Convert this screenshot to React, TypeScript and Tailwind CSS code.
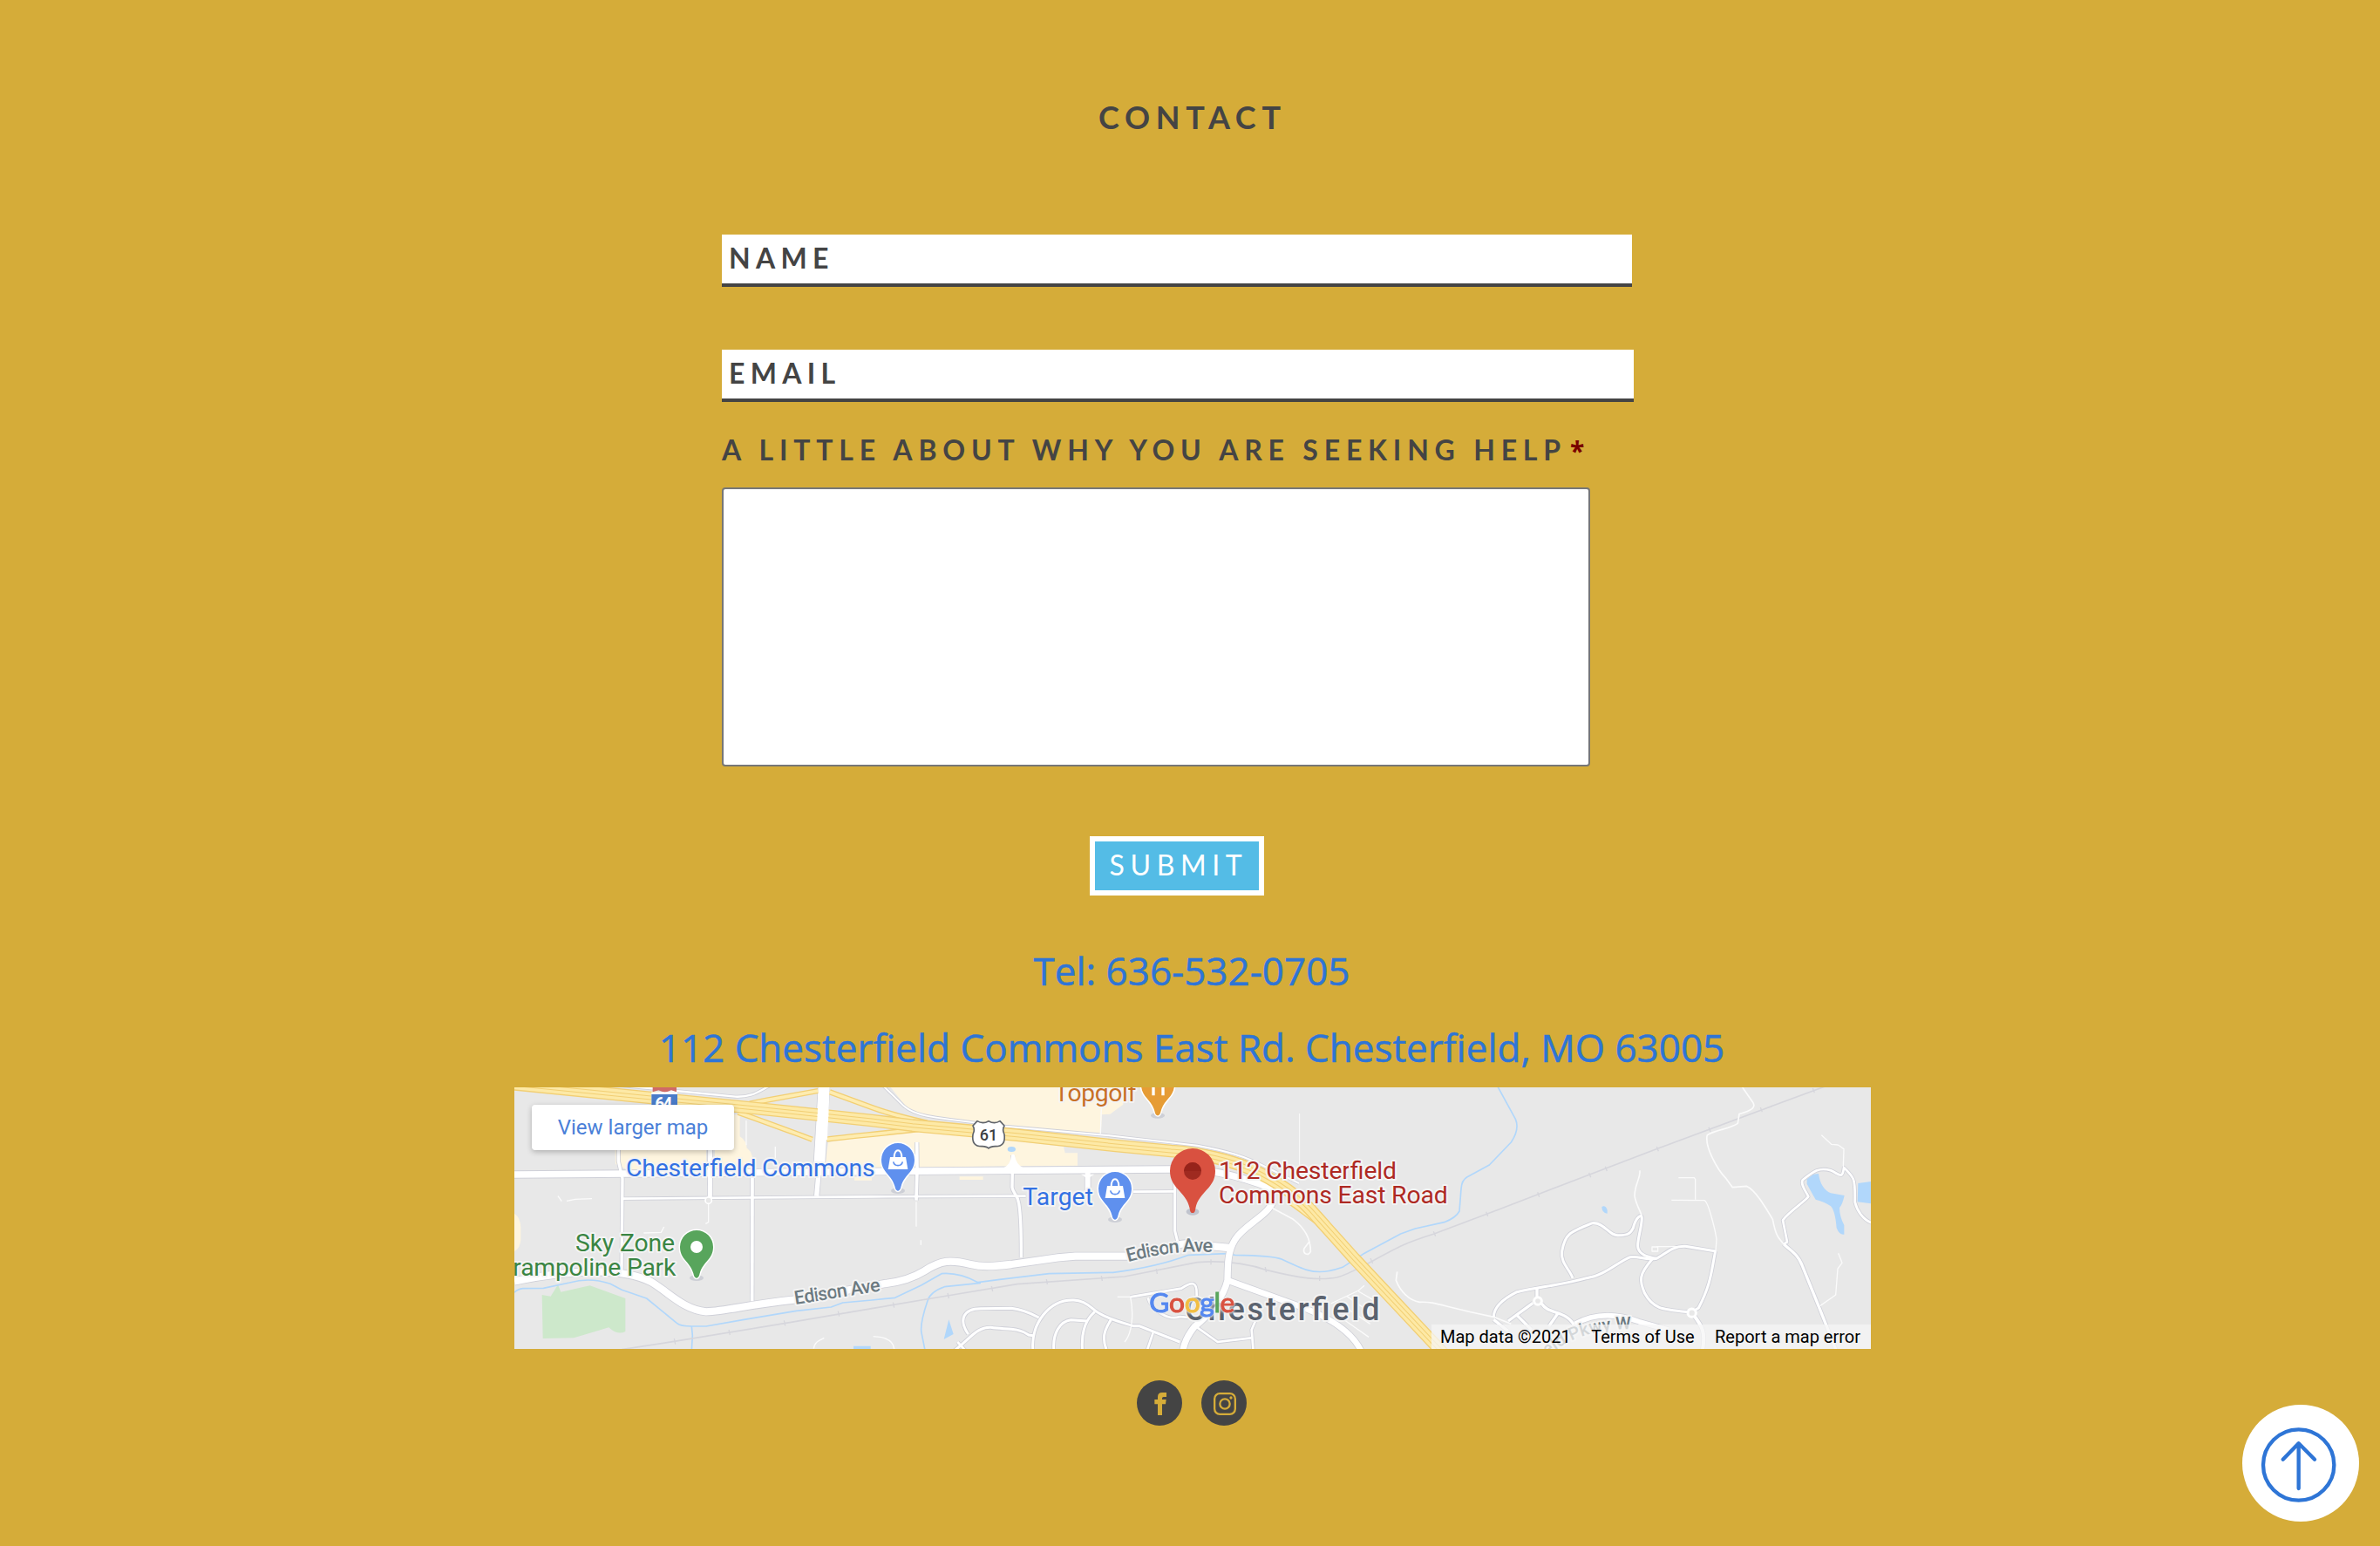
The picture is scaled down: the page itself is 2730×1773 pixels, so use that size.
import React from "react";

const CASING = "#cfd0d8";

type Road = { d: string; w: number };

const majorRoads: Road[] = [
  { d: "M30,336 L420,333 L1300,325 L2290,318 C2400,315 2500,330 2640,385", w: 23 },
  { d: "M30,703 C100,690 150,678 250,672 S440,675 500,705 C560,740 610,800 690,808 C760,806 840,782 990,767 L1300,712 C1360,705 1400,693 1440,668 C1500,630 1530,628 1600,645 C1640,655 1680,652 1740,645 L1900,622 L1960,617 L2140,617 C2240,605 2290,575 2340,574 L2490,588", w: 25 },
  { d: "M2640,430 C2620,480 2540,510 2510,560 C2485,600 2485,640 2484,700 C2470,760 2420,820 2370,860 C2350,885 2335,910 2330,945", w: 22 },
  { d: "M2490,702 L2720,785 C2820,820 2910,870 2945,945", w: 20 },
  { d: "M1096,20 L1078,330", w: 38 },
  { d: "M1078,320 L1070,410", w: 16 },
];

const minorRoads: Road[] = [
  { d: "M400,419 L1260,412 L1790,410 M2160,395 L2300,394", w: 8 },
  { d: "M388,200 L388,290 L402,350 L399,665", w: 10 },
  { d: "M704,240 L703,418", w: 15 },
  { d: "M849,335 L848,772", w: 11 },
  { d: "M1415,225 L1416,320 L1413,425", w: 11 },
  { d: "M1745,270 L1743,380 C1745,400 1762,405 1766,435 C1775,490 1774,560 1774,622", w: 10 },
  { d: "M2003,330 L2003,395", w: 18 },
  { d: "M2303,330 L2303,530 L2312,566", w: 9 },
  { d: "M1200,-60 C1290,20 1330,60 1370,100 C1410,135 1450,138 1720,170 L2060,200 L2380,236 C2480,255 2540,270 2620,312 L2730,366", w: 6 },
  { d: "M400,30 L790,68 C850,70 870,50 910,30", w: 7 },
  { d: "M1540,945 C1600,900 1620,860 1670,862 C1720,870 1760,860 1800,888 L1815,890", w: 9 },
  { d: "M1592,885 C1560,840 1570,795 1640,797 L1740,796 C1780,800 1810,815 1835,828", w: 9 },
  { d: "M1815,945 C1805,850 1870,765 1955,768 C2000,770 2020,800 2030,805 C2070,835 2140,850 2160,857 L2180,857 L2320,912", w: 9 },
  { d: "M1887,945 C1880,880 1910,840 1945,836 L2000,840", w: 9 },
  { d: "M2027,808 C1990,840 1980,890 1985,945", w: 9 },
  { d: "M2083,836 C2060,870 2050,900 2070,945", w: 9 },
  { d: "M2228,880 L2206,945", w: 8 },
  { d: "M2150,757 L2325,728 C2360,705 2380,700 2378,750 L2378,800 M2210,760 C2220,800 2280,840 2320,825 L2370,830", w: 8 },
  { d: "M2370,855 L2450,912 L2565,898 M2580,840 L2567,870 L2573,945", w: 8 },
  { d: "M1555,912 L1590,950", w: 8 },
  { d: "M3400,826 C3400,790 3440,760 3480,740 C3560,722 3640,715 3720,692 C3780,685 3830,635 3870,620 C3900,615 3920,632 3960,625 C3990,610 4015,580 4060,583 L4165,600", w: 9 },
  { d: "M3672,692 C3660,660 3630,640 3635,600 C3645,540 3660,535 3740,503 C3780,500 3800,550 3830,545 C3860,545 3870,540 3880,520 C3890,480 3910,470 3910,485 C3910,520 3890,570 3897,590 C3905,615 3935,620 3960,625", w: 9 },
  { d: "M3945,628 C3900,680 3900,700 3920,745 C3950,800 3980,800 4080,810 L4105,795 C4150,710 4150,660 4163,600", w: 9 },
  { d: "M4398,575 C4430,605 4445,610 4460,645 C4490,720 4520,790 4580,945", w: 10 },
  { d: "M4398,575 L4410,568 L4395,493 C4420,460 4470,430 4483,412 C4475,395 4455,370 4463,355 C4500,325 4520,310 4560,322 C4590,335 4600,355 4605,312 C4640,345 4645,350 4643,430 C4650,460 4670,490 4700,502", w: 8 },
  { d: "M3549,725 L3549,760 M3535,778 L3450,840 M3565,780 C3590,820 3650,800 3680,860 M3620,815 L3590,858 M3480,820 L3530,870 M3400,835 L3450,875", w: 10 },
  { d: "M3680,850 C3760,805 3840,820 3900,842 L4000,870", w: 17 },
  { d: "M4085,815 C4120,860 4130,880 4118,945", w: 12 },
];

const paths: Road[] = [
  { d: "M2640,452 L2710,490 C2750,520 2770,560 2770,600 C2765,618 2740,610 2748,590 L2766,566", w: 5 },
  { d: "M2732,126 L2732,310", w: 3 },
  { d: "M3068,670 L3064,700 C3080,740 3110,770 3145,775 C3200,772 3220,790 3400,826 L3460,850", w: 5 },
  { d: "M4256,36 L4290,85 C4310,110 4270,120 4245,128 L4240,160 C4210,180 4170,180 4135,200 C4125,240 4170,320 4200,350 L4222,380 L4270,376 C4300,390 4330,440 4360,490 C4370,540 4375,550 4398,575", w: 5 },
  { d: "M3903,322 C3905,350 3885,370 3885,410 C3890,440 3905,460 3910,480", w: 5 },
  { d: "M4036,347 L4090,347 L4094,352 L4094,422 M4012,424 L4125,425 C4140,430 4165,540 4167,560 L4164,600", w: 4 },
  { d: "M3960,584 L4060,584 M3945,585 h20 v15 h-20 z", w: 4 },
  { d: "M4528,200 L4562,232 L4585,234 L4605,248 L4603,310", w: 4 },
  { d: "M4586,607 L4599,640 L4584,660 L4577,750 L4524,787", w: 4 },
  { d: "M210,427 L240,421 L297,419 M475,537 L535,535 L545,516 M698,430 L698,500 L688,505 M928,240 L928,280 M828,150 L828,235 M180,410 L193,428 M1060,935 C1062,915 1075,908 1096,898", w: 4 },
  { d: "M1413,430 L1413,515 M1429,562 L1429,578 M2050,105 L2047,195 M2105,757 L2150,757 C2165,830 2150,890 2130,912 M1265,893 C1310,895 1335,910 1337,936", w: 4 },
  { d: "M2840,780 L2935,735 L2955,718 M2935,738 L2990,770 M2895,755 L2960,800 M2870,825 L2970,895 M2900,800 L2975,850", w: 4 },
];

const HIGHWAY =
  "M0,22 L500,72 L860,108 L1260,150 L1400,167 L1760,200 L2100,237 L2290,255 C2400,262 2500,290 2560,315 C2660,360 2740,420 2790,480 L2920,625 L3230,955";
const RAMPS =
  "M840,92 L900,80 L1075,48 M1115,52 L1260,105 C1300,120 1370,140 1450,158 M800,122 C880,150 960,180 1055,215 M1105,215 C1180,205 1300,195 1420,180 M2690,425 C2740,455 2770,490 2810,510 M3120,840 L3220,925";
const RAIL =
  "M400,938 L580,910 L960,848 L1260,797 L1520,753 L1760,713 L2130,687 L2380,638 C2480,630 2560,645 2620,665 C2740,695 2800,700 2860,690 C2900,680 2940,655 2980,635 C3080,580 3100,570 3195,540 L3420,455 L3960,248 L4540,33";

function Pin({ x, y, fill, children }: { x: number; y: number; fill: string; children?: React.ReactNode }) {
  return (
    <g transform={`translate(${x} ${y})`}>
      <ellipse cx="0" cy="107" rx="24" ry="10" fill="#9aa0b4" opacity="0.35" />
      <path
        d="M0,107 C-7,107 -9,99 -11,91 C-22,50 -57,44 -57,0 A57,57 0 1 1 57,0 C57,44 22,50 11,91 C9,99 7,107 0,107 Z"
        fill={fill}
        stroke="#fff"
        strokeWidth="9"
        paintOrder="stroke"
      />
      {children}
    </g>
  );
}

function Bag() {
  return (
    <g>
      <path d="M-27,-9 H27 L34,33 H-34 Z" fill="#fff" />
      <path d="M-13,-8 C-13,-40 13,-40 13,-8" fill="none" stroke="#fff" strokeWidth="6" />
      <path d="M-16,7 C-12,24 12,24 16,7" fill="none" stroke="#5f90ee" strokeWidth="5" />
    </g>
  );
}

function MapDrawing() {
  const halo = { paintOrder: "stroke", strokeLinejoin: "round" } as const;
  return (
    <svg viewBox="30 36 4668 900" className="block h-[300px] w-[1556px]" fontFamily="Roboto, sans-serif">
      <rect x="30" y="36" width="4668" height="900" fill="#e8e8e8" />
      <g fill="#fef5df">
        <path d="M1325,36 H2130 L2125,95 L2080,128 L2052,130 L2048,198 L1720,170 L1440,137 L1380,105 Z" />
        <path d="M1110,225 L1300,190 L1420,180 L1920,240 L1925,262 H1968 V305 L1230,312 H1098 Z" />
        <path d="M376,230 H690 V320 H420 L378,300 Z M720,240 H820 Q850,250 850,290 V320 H720 Z M760,130 H806 V205 Q830,220 830,250 H760 Z" />
        <path d="M30,470 Q52,485 52,520 V560 Q50,590 30,600 Z M1200,345 H1260 V356 H1200 Z M1562,343 H1643 V354 H1562 Z" />
      </g>
      <path d="M125,750 L155,755 L180,715 L190,740 L290,718 L412,762 V876 Q385,890 355,862 L235,898 L128,900 Z" fill="#cde8cb" />
      <g fill="#b1d7fb">
        <path d="M1525,835 L1541,885 L1508,903 Z M1197,926 H1256 V936 H1197 Z" />
        <ellipse cx="1741" cy="249" rx="14" ry="9" />
        <path d="M4478,352 L4500,335 L4518,333 Q4525,385 4560,400 L4607,408 Q4600,440 4590,450 Q4590,480 4606,510 V542 Q4590,545 4580,520 Q4575,460 4560,445 Q4540,430 4508,422 Q4495,400 4478,368 Z" />
        <path d="M4654,366 L4698,360 V436 L4652,430 Z M3772,447 Q3785,440 3791,458 V470 Q3772,468 3772,447 Z" />
      </g>
      <g fill="none" stroke="#b1d7fb" strokeWidth="5" strokeLinejoin="round">
        <path d="M30,742 Q40,730 60,728 L130,727 L220,708 Q290,688 360,712 L400,733 L485,762 L590,848 Q600,858 640,858 H690 L820,835 L1000,805 L1120,792 L1160,777 L1260,768 L1340,760 L1430,717 L1500,677 Q1560,672 1625,707 L1700,697 L1870,677 L2090,673 Q2240,655 2350,613 L2480,608 L2510,613 Q2640,615 2670,627 Q2740,660 2760,665 Q2810,680 2880,655 L2950,610 L3080,540 L3130,522 L3230,500 Q3270,485 3282,462 L3288,385 Q3290,355 3308,345 L3385,303 L3460,225 Q3490,180 3475,145 L3412,30" />
        <path d="M640,858 L643,890 L640,940 M1635,709 L1510,722 Q1460,740 1452,770 Q1425,850 1431,880 L1443,940" />
      </g>
      <g fill="none">
        <path d={RAIL} stroke="#d6d6dc" strokeWidth="5" />
        <path
          d="M580,900 l4,20 M768,870 l4,18 M958,838 l4,18 M1144,806 l4,18 M1333,776 l4,18 M1521,744 l4,18 M1672,720 l4,18 M1861,696 l3,18 M2050,684 l3,18 M2239,660 l3,18 M2427,628 v18 M2614,654 l3,18 M2801,684 v18 M2976,624 l8,18 M3193,532 l7,16 M3374,464 l6,16 M3551,397 l6,16 M3728,330 l6,16 M3784,308 l6,16 M3961,240 l6,16 M4140,173 l6,16 M4318,105 l6,16 M4498,39 l6,16"
          stroke="#d6d6dc"
          strokeWidth="4"
        />
      </g>
      <g fill="none" strokeLinejoin="round">
        {[...minorRoads, ...majorRoads].map((r, i) => (
          <path key={i} d={r.d} stroke={CASING} strokeWidth={r.w + 5} />
        ))}
        {paths.map((r, i) => (
          <path key={i} d={r.d} stroke="#fbfbfb" strokeWidth={r.w} />
        ))}
        {[...minorRoads, ...majorRoads].map((r, i) => (
          <path key={i} d={r.d} stroke="#fff" strokeWidth={r.w} />
        ))}
      </g>
      <path d="M1715,312 Q1738,300 1740,270 Q1746,262 1752,270 Q1756,300 1780,312 Z M1980,335 Q2003,345 2003,365 Q2003,345 2026,335 Z" fill="#fff" />
      <circle cx="3552" cy="771" r="13" fill="#e8e8e8" stroke="#fff" strokeWidth="9" />
      <circle cx="4082" cy="812" r="14" fill="#e8e8e8" stroke="#fff" strokeWidth="9" />
      <circle cx="698" cy="425" r="11" fill="#e8e8e8" stroke="#fff" strokeWidth="5" />
      <g fill="none" strokeLinejoin="round">
        <path d={RAMPS} stroke="#f2cf74" strokeWidth="19" />
        <path d={RAMPS} stroke="#feecb0" strokeWidth="11" />
        <path d={HIGHWAY} stroke="#f2cf74" strokeWidth="44" />
        <path d={HIGHWAY} stroke="#fde9a6" strokeWidth="36" />
        <path d={HIGHWAY} stroke="#f2cf74" strokeWidth="15" />
        <path d={HIGHWAY} stroke="#fde9a6" strokeWidth="9" />
      </g>
      <path d="M1096,20 L1094,84" stroke="#fff" strokeWidth="38" />
      <path d="M1092,130 L1088,215" stroke="#fff" strokeWidth="38" />
      <path d="M1094,80 L1092,135" stroke="#fff" strokeWidth="38" />

      <g>
        <path d="M506,30 H588 V52 L570,46 L548,54 L526,46 L506,52 Z" fill="#cf6a66" />
        <path d="M502,52 H591 V110 H502 Z" fill="#fff" />
        <path d="M502,60 H591 V110 H502 Z" fill="#4a7bc8" />
        <text x="514" y="113" fontSize="58" fontWeight="700" fill="#fff" textLength="60">64</text>
      </g>
      <g>
        <path
          d="M1623,152 Q1642,164 1662,152 Q1682,164 1701,152 L1716,168 Q1708,182 1716,198 Q1722,240 1684,239 Q1668,240 1662,246 Q1656,240 1640,239 Q1602,240 1608,198 Q1616,182 1608,168 Z"
          fill="#fff"
          stroke="#60646a"
          strokeWidth="5"
          strokeLinejoin="round"
        />
        <text x="1662" y="220" fontSize="54" fontWeight="500" fill="#3c4043" textAnchor="middle">61</text>
      </g>

      <g stroke="#f4f4f4" strokeWidth="12" style={halo} fontSize="85">
        <text x="414" y="341" fill="#3371e3" textLength="857">Chesterfield Commons</text>
        <text x="1780" y="441" fill="#3371e3" textLength="242">Target</text>
        <text x="1888" y="83" fill="#c87026" textLength="282">Topgolf</text>
        <text x="582" y="600" fill="#3a8543" textAnchor="end" textLength="342">Sky Zone</text>
        <text x="586" y="685" fill="#3a8543" textAnchor="end" textLength="608">Trampoline Park</text>
        <text x="2454" y="350" fill="#ae2923" textLength="612">112 Chesterfield</text>
        <text x="2454" y="434" fill="#ae2923" textLength="788">Commons East Road</text>
      </g>
      <g stroke="#f4f4f4" strokeWidth="12" style={halo} fontSize="65" fontWeight="500" fill="#6c7a81">
        <text x="0" y="0" transform="translate(997 783) rotate(-9)" textLength="298">Edison Ave</text>
        <path id="edison" d="M2142,637 Q2300,592 2450,604" fill="none" stroke="none" />
        <text textLength="294">
          <textPath href="#edison">Edison Ave</textPath>
        </text>
        <path id="parkway" d="M3586,960 Q3700,865 3870,868" fill="none" stroke="none" />
        <text fontSize="60">
          <textPath href="#parkway">eld Pkwy W</textPath>
        </text>
      </g>
      <text x="2338" y="836" fontSize="108" fontWeight="500" fill="#5b636f" stroke="#f4f4f4" strokeWidth="12" style={halo} textLength="670">
        Chesterfield
      </text>

      <Pin x={1350} y={285} fill="#5f90ee"><Bag /></Pin>
      <Pin x={2097} y={384} fill="#5f90ee"><Bag /></Pin>
      <Pin x={657} y={585} fill="#58a55c"><circle r="21" fill="#fff" /></Pin>
      <Pin x={2244} y={26} fill="#e69c35"><path d="M-20,-20 h10 v58 h-10 z M13,-20 h10 v58 h-10 z" fill="#fff" /></Pin>
      <g transform="translate(2364 324)">
        <ellipse cx="0" cy="140" rx="22" ry="12" fill="#9aa0b4" opacity="0.5" />
        <path d="M0,144 C-8,144 -9,136 -10,128 C-22,70 -78,60 -78,0 A78,78 0 1 1 78,0 C78,60 22,70 10,128 C9,136 8,144 0,144 Z" fill="#d95140" />
        <circle r="30" fill="#9f2a20" />
        <path d="M-30,0 A30,30 0 0 1 30,0 Z" fill="#96231a" />
      </g>
      <text
        x="2215"
        y="810"
        fontFamily="Lato, sans-serif"
        fontSize="95"
        strokeWidth="3"
        style={{ filter: "drop-shadow(0 0 5px #eeeeee) drop-shadow(0 0 3px #eeeeee)" }}
        textLength="294"
      >
        <tspan fill="#5588f0" stroke="#5588f0">G</tspan>
        <tspan fill="#d95140" stroke="#d95140">o</tspan>
        <tspan fill="#f2be42" stroke="#f2be42">o</tspan>
        <tspan fill="#5588f0" stroke="#5588f0">g</tspan>
        <tspan fill="#58a55c" stroke="#58a55c">l</tspan>
        <tspan fill="#d95140" stroke="#d95140">e</tspan>
      </text>
    </svg>
  );
}

function MapEmbed() {
  return (
    <div className="relative ml-[590px] mt-[14px] h-[300px] w-[1556px] overflow-hidden font-[Roboto,sans-serif]">
      <MapDrawing />
      <a className="absolute left-[20px] top-[20px] flex h-[52px] w-[232px] items-center justify-center rounded-[4px] bg-white text-[24px] text-[#4a80d8] shadow-[0_2px_6px_rgba(0,0,0,0.25)]">
        View larger map
      </a>
      <div className="absolute bottom-0 right-0 flex h-[28px] w-[504px] items-center justify-between whitespace-nowrap bg-[#f5f5f5]/75 pl-[10px] pr-[12px] text-[20px] text-black">
        <span>Map data ©2021</span>
        <span>Terms of Use</span>
        <span>Report a map error</span>
      </div>
    </div>
  );
}

export default function App() {
  return (
    <main className="relative flex h-[1773px] w-[2730px] flex-col overflow-hidden bg-[#d5ac39] font-[Open_Sans,sans-serif] text-[#444444]">
      <h1 className="mt-[108px] h-[52px] pl-[1260px] text-[36px] leading-[52px] font-bold tracking-[6.7px] font-[Lato,sans-serif]">
        CONTACT
      </h1>
      <form className="ml-[828px] mt-[109px] flex w-[1046px] flex-col font-[Lato,sans-serif] text-[32px] font-bold">
        <div className="flex h-[60px] w-[1044px] items-center border-b-4 border-[#444444] bg-white pb-[3px] pl-[8px] tracking-[6.3px]">
          NAME
        </div>
        <div className="mt-[72px] flex h-[60px] w-[1046px] items-center border-b-4 border-[#444444] bg-white pb-[3px] pl-[8px] tracking-[6.3px]">
          EMAIL
        </div>
        <label className="mt-[33px] flex h-[44px] items-center whitespace-nowrap tracking-[6.8px]">
          A LITTLE ABOUT WHY YOU ARE SEEKING HELP
          <span className="ml-[4px] font-[Open_Sans,sans-serif] text-[30px] text-[#790000]">*</span>
        </label>
        <textarea className="mt-[21px] h-[320px] w-[996px] resize-none rounded-[4px] border-2 border-[#767676] bg-white" />
        <button
          type="button"
          className="ml-[422px] mt-[80px] h-[68px] w-[200px] border-[6px] border-white bg-[#54bce6] pb-[2px] pl-[4px] text-[32px] leading-[50px] font-normal tracking-[6.6px] text-white"
        >
          SUBMIT
        </button>
      </form>
      <a className="mt-[54px] block h-[64px] w-[2734px] text-center text-[44px] leading-[64px] text-[#2e75d6] [-webkit-text-stroke:0.5px_#2e75d6]">
        Tel: 636-532-0705
      </a>
      <a className="mt-[24px] block h-[64px] w-[2734px] text-center text-[44px] leading-[64px] text-[#2e75d6] [-webkit-text-stroke:0.5px_#2e75d6]">
        112 Chesterfield Commons East Rd. Chesterfield, MO 63005
      </a>
      <MapEmbed />
      <div className="ml-[1304px] mt-[36px] flex gap-[22px]">
        <a className="h-[52px] w-[52px]">
          <svg viewBox="0 0 156 156" className="block h-full w-full">
            <circle cx="78" cy="78" r="78" fill="#444" />
            <path d="M72,120 V82 H61 V66 H72 V57 Q72,42 87,42 H102 V57 H92 Q87,57 87,62 V66 H101 L99,82 H87 V120 Z" fill="#d5ac39" />
          </svg>
        </a>
        <a className="h-[52px] w-[52px]">
          <svg viewBox="0 0 156 156" className="block h-full w-full">
            <circle cx="78" cy="78" r="78" fill="#444" />
            <g fill="none" stroke="#d5ac39" strokeWidth="7">
              <rect x="45.500" y="45.500" width="71" height="71" rx="18" />
              <circle cx="81" cy="81" r="17" />
            </g>
            <circle cx="102" cy="60" r="5" fill="#d5ac39" />
          </svg>
        </a>
      </div>
      <button type="button" className="absolute left-[2572px] top-[1611px] h-[134px] w-[134px] rounded-full bg-white">
        <svg viewBox="66 63 402 402" className="block h-full w-full" fill="none" stroke="#2e75d6" strokeWidth="13" strokeLinecap="round" strokeLinejoin="round">
          <circle cx="260" cy="270" r="122" />
          <path d="M260,351 V196 M206,251 L260,196 L315,251" />
        </svg>
      </button>
    </main>
  );
}
